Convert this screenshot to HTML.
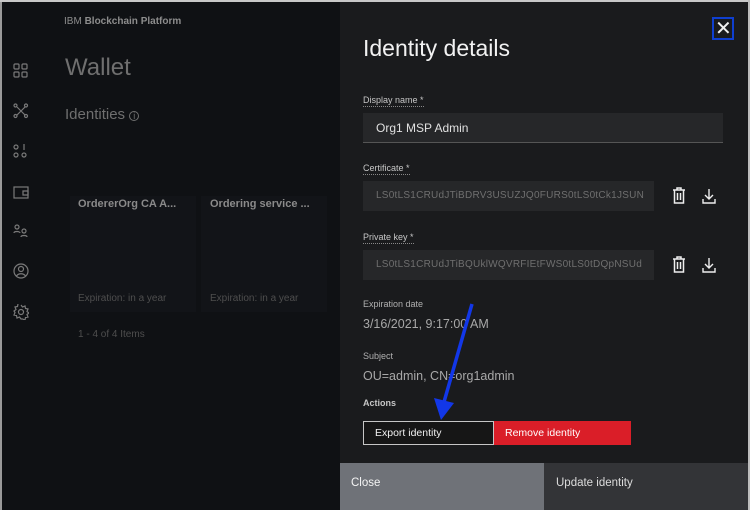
<!DOCTYPE html>
<html><head><style>
*{margin:0;padding:0;box-sizing:border-box}
body{width:750px;height:510px;overflow:hidden;background:#0f1114;font-family:"Liberation Sans",sans-serif;position:relative}
.t{position:absolute;white-space:nowrap}
.top{position:absolute;left:0;top:0;width:750px;height:2px;background:#c8c8c8}
.left{position:absolute;left:0;top:2px;width:2px;height:508px;background:#9a9a9a}
.panel{position:absolute;left:340px;top:2px;width:408px;height:508px;background:#1a1b1d}
.rb{position:absolute;left:748px;top:0;width:2px;height:510px;background:#bdbdbd}
.card{position:absolute;top:196px;width:126px;height:116px;background:#121418}
.inp{position:absolute;left:363px;height:30px;background:#262729;border-bottom:1px solid #555}
.lbl{position:absolute;left:363px;font-size:9px;color:#c6c6c6;border-bottom:1px dotted #888;line-height:11px}
.ic{position:absolute;left:13px;width:16px;height:16px}
</style></head><body>
<div class="top"></div><div class="left"></div>
<div class="t" style="left:64px;top:16px;font-size:10px;color:#8d8d8d">IBM <b>Blockchain Platform</b></div>
<div class="t" style="left:65px;top:54px;font-size:24px;color:#6f6f6f">Wallet</div>
<div class="t" style="left:65px;top:106px;font-size:15px;color:#6f6f6f">Identities <span style="font-size:9px;border:1px solid #6f6f6f;border-radius:50%;display:inline-block;width:10px;height:10px;line-height:9px;text-align:center">i</span></div>
<svg class="ic" style="top:63px" viewBox="0 0 16 16" fill="none" stroke="#7a7a7a" stroke-width="1.2"><rect x="1" y="1" width="5" height="5" rx="1"/><rect x="9" y="1" width="5" height="5" rx="1"/><rect x="1" y="9" width="5" height="5" rx="1"/><rect x="9" y="9" width="5" height="5" rx="1"/></svg>
<svg class="ic" style="top:103px" viewBox="0 0 16 16" fill="none" stroke="#7a7a7a" stroke-width="1.2"><circle cx="2.5" cy="2.5" r="1.5"/><circle cx="13" cy="2.5" r="1.5"/><circle cx="2.5" cy="13" r="1.5"/><circle cx="13" cy="13" r="1.5"/><path d="M4 4l8 8M12 4l-8 8"/></svg>
<svg class="ic" style="top:143px" viewBox="0 0 16 16" fill="none" stroke="#7a7a7a" stroke-width="1.2"><circle cx="3" cy="4" r="2"/><path d="M11 1v6"/><circle cx="3" cy="12" r="2"/><circle cx="11" cy="12" r="2"/></svg>
<svg class="ic" style="top:184px" viewBox="0 0 16 16" fill="none" stroke="#7a7a7a" stroke-width="1.2"><rect x="1" y="3" width="14" height="11"/><path d="M10 7h5v4h-5z"/></svg>
<svg class="ic" style="top:223px" viewBox="0 0 16 16" fill="none" stroke="#7a7a7a" stroke-width="1.2"><circle cx="4" cy="4" r="2"/><path d="M1 10c0-2 6-2 6 0"/><circle cx="11" cy="8" r="2"/><path d="M8 14c0-2 6-2 6 0"/></svg>
<svg class="ic" style="top:263px" viewBox="0 0 16 16" fill="none" stroke="#7a7a7a" stroke-width="1.2"><circle cx="8" cy="8" r="7"/><circle cx="8" cy="6" r="2.5"/><path d="M3.5 13c2-3 7-3 9 0"/></svg>
<svg class="ic" style="top:304px" viewBox="0 0 16 16" fill="none" stroke="#7a7a7a" stroke-width="1.2"><circle cx="8" cy="8" r="2.5"/><path d="M8 1l1.5 2 2.5-1 .5 2.5 2.5.5-1 2.5 2 1.5-2 1.5 1 2.5-2.5.5-.5 2.5-2.5-1L8 15l-1.5-2-2.5 1-.5-2.5L1 11l1-2.5L1 7l2-1.5L2 3l2.5-.5L5 0"/></svg>
<div class="card" style="left:70px"></div><div class="card" style="left:201px"></div>
<div class="t" style="left:78px;top:198px;font-size:11px;font-weight:bold;color:#8a8a8a">OrdererOrg CA A...</div>
<div class="t" style="left:210px;top:198px;font-size:11px;font-weight:bold;color:#8a8a8a">Ordering service ...</div>
<div class="t" style="left:78px;top:293px;font-size:10px;color:#4e4e4e">Expiration: in a year</div>
<div class="t" style="left:210px;top:293px;font-size:10px;color:#4e4e4e">Expiration: in a year</div>
<div class="t" style="left:78px;top:329px;font-size:10px;color:#4e4e4e">1 - 4 of 4 Items</div>
<div class="panel"></div><div class="rb"></div>
<div style="position:absolute;left:712px;top:17px;width:22px;height:23px;border:2px solid #0f3fd0"></div>
<div class="t" style="left:715px;top:16px;font-size:20px;color:#f0f0f0">✕</div>
<div class="t" style="left:363px;top:35px;font-size:23px;color:#f2f2f2">Identity details</div>
<div class="lbl" style="top:95px">Display name *</div>
<div class="inp" style="top:113px;width:360px"></div>
<div class="t" style="left:376px;top:121px;font-size:12px;color:#e0e0e0">Org1 MSP Admin</div>
<div class="lbl" style="top:163px">Certificate *</div>
<div class="inp" style="top:181px;width:291px;border-bottom:none"></div>
<div class="t" style="left:376px;top:190px;font-size:10px;color:#6f6f6f;letter-spacing:.25px">LS0tLS1CRUdJTiBDRV3USUZJQ0FURS0tLS0tCk1JSUN</div>
<div class="lbl" style="top:232px">Private key *</div>
<div class="inp" style="top:250px;width:291px;border-bottom:none"></div>
<div class="t" style="left:376px;top:259px;font-size:10px;color:#6f6f6f;letter-spacing:.25px">LS0tLS1CRUdJTiBQUklWQVRFIEtFWS0tLS0tDQpNSUd</div>
<svg style="position:absolute;left:672px;top:187px" width="14" height="17" viewBox="0 0 14 17" fill="none" stroke="#eee" stroke-width="1.5"><path d="M1 3h12M5 3V1h4v2M2.5 3v13h9V3M5.5 6v7M8.5 6v7"/></svg>
<svg style="position:absolute;left:702px;top:188px" width="14" height="16" viewBox="0 0 14 16" fill="none" stroke="#eee" stroke-width="1.4"><path d="M7 1v10M3 7l4 4 4-4M1 11v4h12v-4"/></svg>
<svg style="position:absolute;left:672px;top:256px" width="14" height="17" viewBox="0 0 14 17" fill="none" stroke="#eee" stroke-width="1.5"><path d="M1 3h12M5 3V1h4v2M2.5 3v13h9V3M5.5 6v7M8.5 6v7"/></svg>
<svg style="position:absolute;left:702px;top:257px" width="14" height="16" viewBox="0 0 14 16" fill="none" stroke="#eee" stroke-width="1.4"><path d="M7 1v10M3 7l4 4 4-4M1 11v4h12v-4"/></svg>
<div class="t" style="left:363px;top:299px;font-size:9px;color:#b0b0b0">Expiration date</div>
<div class="t" style="left:363px;top:317px;font-size:12.5px;color:#a8a8a8">3/16/2021, 9:17:00 AM</div>
<div class="t" style="left:363px;top:351px;font-size:9px;color:#b0b0b0">Subject</div>
<div class="t" style="left:363px;top:369px;font-size:12.5px;color:#a8a8a8">OU=admin, CN=org1admin</div>
<div class="t" style="left:363px;top:398px;font-size:9px;font-weight:bold;color:#c6c6c6">Actions</div>
<div style="position:absolute;left:363px;top:421px;width:131px;height:24px;border:1px solid #c6c6c6;background:#161616"></div>
<div class="t" style="left:375px;top:427px;font-size:10.5px;color:#f0f0f0">Export identity</div>
<div style="position:absolute;left:494px;top:421px;width:137px;height:24px;background:#da1e28"></div>
<div class="t" style="left:505px;top:427px;font-size:10.5px;color:#fff">Remove identity</div>
<div style="position:absolute;left:340px;top:463px;width:204px;height:47px;background:#6f7278"></div>
<div class="t" style="left:351px;top:477px;font-size:11.5px;color:#f4f4f4">Close</div>
<div style="position:absolute;left:544px;top:463px;width:204px;height:47px;background:#333437"></div>
<div class="t" style="left:556px;top:477px;font-size:11.5px;color:#dcdcdc">Update identity</div>
<svg style="position:absolute;left:0;top:0" width="750" height="510"><path d="M472 304L444 402" stroke="#1237e8" stroke-width="3.5"/><path d="M434 398L454 403L441 420Z" fill="#1237e8"/></svg>
</body></html>
